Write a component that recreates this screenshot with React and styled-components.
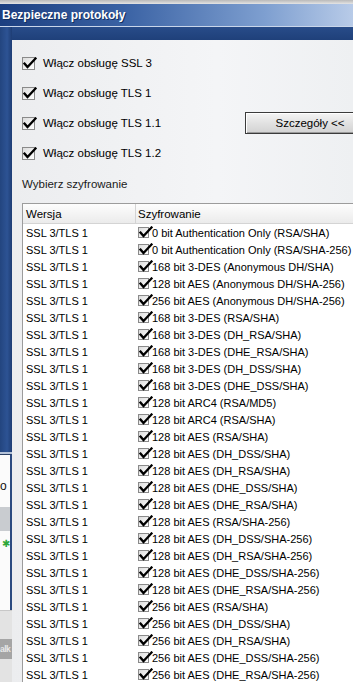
import React from 'react'
import styled, { createGlobalStyle } from 'styled-components'

const GlobalStyle = createGlobalStyle`
  html, body {
    margin: 0;
    padding: 0;
    width: 353px;
    height: 682px;
    overflow: hidden;
    background: #d4d4d4;
  }
  body {
    font-family: 'Liberation Sans', Arial, sans-serif;
    font-size: 11px;
    color: #000;
  }
`

const ciphers = [
  '0 bit Authentication Only (RSA/SHA)',
  '0 bit Authentication Only (RSA/SHA-256)',
  '168 bit 3-DES (Anonymous DH/SHA)',
  '128 bit AES (Anonymous DH/SHA-256)',
  '256 bit AES (Anonymous DH/SHA-256)',
  '168 bit 3-DES (RSA/SHA)',
  '168 bit 3-DES (DH_RSA/SHA)',
  '168 bit 3-DES (DHE_RSA/SHA)',
  '168 bit 3-DES (DH_DSS/SHA)',
  '168 bit 3-DES (DHE_DSS/SHA)',
  '128 bit ARC4 (RSA/MD5)',
  '128 bit ARC4 (RSA/SHA)',
  '128 bit AES (RSA/SHA)',
  '128 bit AES (DH_DSS/SHA)',
  '128 bit AES (DH_RSA/SHA)',
  '128 bit AES (DHE_DSS/SHA)',
  '128 bit AES (DHE_RSA/SHA)',
  '128 bit AES (RSA/SHA-256)',
  '128 bit AES (DH_DSS/SHA-256)',
  '128 bit AES (DH_RSA/SHA-256)',
  '128 bit AES (DHE_DSS/SHA-256)',
  '128 bit AES (DHE_RSA/SHA-256)',
  '256 bit AES (RSA/SHA)',
  '256 bit AES (DH_DSS/SHA)',
  '256 bit AES (DH_RSA/SHA)',
  '256 bit AES (DHE_DSS/SHA-256)',
  '256 bit AES (DHE_RSA/SHA-256)'
]

const protocols = [
  'Włącz obsługę SSL 3',
  'Włącz obsługę TLS 1',
  'Włącz obsługę TLS 1.1',
  'Włącz obsługę TLS 1.2'
]

const Check = ({ small }) => (
  <Box $small={small}>
    <svg width="15" height="13" viewBox="0 0 15 13">
      <path
        d="M2.5 6.5 L5.5 10 L13.5 1.5"
        fill="none"
        stroke="#000"
        strokeWidth="2.3"
        strokeLinecap="square"
      />
    </svg>
  </Box>
)

export default function App() {
  return (
    <Screen>
      <GlobalStyle />
      <TopStripe />
      <TitleBar>Bezpieczne protokoły</TitleBar>
      <Body>
        <LeftStrip>
          <StripBlue />
          <StripWindow>
            <StripLetter>o</StripLetter>
            <StripGrey />
            <StripIcon>✱</StripIcon>
          </StripWindow>
          <StripLower>
            <StripButton>alk</StripButton>
          </StripLower>
        </LeftStrip>
        <Main>
          <Band />
          <Panel>
            <Options>
              {protocols.map((p, i) => (
                <Option key={p} style={{ gridRow: i + 1 }}>
                  <Check />
                  <span>{p}</span>
                </Option>
              ))}
              <DetailsButton>Szczegóły &lt;&lt;</DetailsButton>
            </Options>
            <SectionLabel>Wybierz szyfrowanie</SectionLabel>
            <Table>
              <HeaderRow>
                <HeadCell $first>Wersja</HeadCell>
                <HeadCell>Szyfrowanie</HeadCell>
              </HeaderRow>
              {ciphers.map((c) => (
                <Row key={c}>
                  <Cell $first>SSL 3/TLS 1</Cell>
                  <Cell>
                    <Check small />
                    <span>{c}</span>
                  </Cell>
                </Row>
              ))}
            </Table>
          </Panel>
        </Main>
      </Body>
    </Screen>
  )
}

const Screen = styled.div`
  width: 353px;
  height: 682px;
  display: flex;
  flex-direction: column;
  overflow: hidden;
`

const TopStripe = styled.div`
  height: 4px;
  background: linear-gradient(to bottom, #b9b9b9, #e4e4e4);
  flex-shrink: 0;
`

const TitleBar = styled.div`
  height: 23px;
  flex-shrink: 0;
  box-sizing: border-box;
  padding: 0 0 1px 2px;
  display: flex;
  align-items: center;
  background: linear-gradient(to right, #1c3f80 0%, #3a62a4 35%, #7e9fd0 75%, #b8cbe8 100%);
  border-bottom: 1px solid #c9d6ea;
  color: #fff;
  font-weight: bold;
  font-size: 12px;
  text-shadow: 1px 1px 0 #12305f;
`

const Body = styled.div`
  flex: 1;
  display: flex;
  min-height: 0;
`

const LeftStrip = styled.div`
  width: 12px;
  flex-shrink: 0;
  display: flex;
  flex-direction: column;
`

const StripBlue = styled.div`
  height: 425px;
  background: linear-gradient(to right, #23457f, #2d5394 60%, #1e3d74);
  border-bottom: 2px solid #b4c2d8;
`

const StripWindow = styled.div`
  height: 155px;
  background: #fbfbfb;
  border-top: 1px solid #2a3f63;
  border-right: 2px solid #2b4a80;
  display: flex;
  flex-direction: column;
  overflow: hidden;
`

const StripLetter = styled.div`
  height: 52px;
  padding-top: 24px;
  box-sizing: border-box;
  font-size: 12px;
  color: #111;
`

const StripGrey = styled.div`
  height: 24px;
  background: #c9ccd0;
`

const StripIcon = styled.div`
  margin-top: 8px;
  font-size: 10px;
  color: #2fa83a;
  text-align: right;
  line-height: 1;
`

const StripLower = styled.div`
  flex: 1;
  background: #e3e3e3;
  border-top: 1px solid #c8c8c8;
  padding-top: 28px;
`

const StripButton = styled.div`
  height: 20px;
  background: #a5a5a5;
  color: #e8e8e8;
  font-weight: bold;
  font-size: 8.5px;
  line-height: 20px;
  letter-spacing: -0.6px;
  white-space: nowrap;
`

const Main = styled.div`
  flex: 1;
  display: flex;
  flex-direction: column;
  min-width: 0;
`

const Band = styled.div`
  height: 13px;
  flex-shrink: 0;
  background: linear-gradient(to bottom, #284c89, #1f407a);
`

const Panel = styled.div`
  flex: 1;
  background: linear-gradient(to right, #ecedef, #f4f5f7 60%, #eef0f2);
  padding: 13px 0 0 10px;
  overflow: hidden;
  display: flex;
  flex-direction: column;
`

const Options = styled.div`
  display: grid;
  grid-template-columns: 223px 130px;
  grid-auto-rows: 20px;
  row-gap: 10px;
`

const Option = styled.label`
  grid-column: 1;
  display: flex;
  align-items: center;
  gap: 8px;
  font-size: 11.5px;
`

const Box = styled.span`
  position: relative;
  flex-shrink: 0;
  box-sizing: border-box;
  width: ${(p) => (p.$small ? '11px' : '13px')};
  height: ${(p) => (p.$small ? '11px' : '13px')};
  border: 1px solid #8a8a8a;
  background: linear-gradient(135deg, #dcdcdc, #ffffff);

  svg {
    position: absolute;
    left: -1px;
    top: ${(p) => (p.$small ? '-2px' : '-1px')};
  }
`

const DetailsButton = styled.button`
  grid-column: 2;
  grid-row: 3;
  align-self: center;
  height: 22px;
  width: 130px;
  padding: 0;
  border: 1px solid #3b3b3b;
  box-shadow: inset 1px 1px 0 #fff, inset -1px -1px 0 #9a9a9a;
  background: linear-gradient(to bottom, #f4f4f4, #e2e2e2 50%, #d2d2d2);
  font-family: inherit;
  font-size: 11.5px;
  color: #000;
  text-align: center;
`

const SectionLabel = styled.div`
  margin-top: 14px;
  height: 14px;
  line-height: 14px;
  font-size: 11.5px;
  color: #1a1a1a;
`

const Table = styled.div`
  margin-top: 12px;
  width: 340px;
  flex: 1;
  background: #fff;
  border-top: 1px solid #9c9c9c;
  border-left: 1px solid #9c9c9c;
`

const HeaderRow = styled.div`
  display: grid;
  grid-template-columns: 113px 1fr;
  height: 19px;
  background: linear-gradient(to bottom, #fdfdfd, #ebebeb);
  border-bottom: 1px solid #d4d4d4;
`

const HeadCell = styled.div`
  display: flex;
  align-items: center;
  padding-left: ${(p) => (p.$first ? '3px' : '2px')};
  border-right: ${(p) => (p.$first ? '1px solid #d3d3d3' : 'none')};
  font-size: 11.5px;
`

const Row = styled.div`
  display: grid;
  grid-template-columns: 114px 1fr;
  height: 17px;
`

const Cell = styled.div`
  display: flex;
  align-items: center;
  gap: 3px;
  padding-left: ${(p) => (p.$first ? '3px' : '1px')};
  white-space: nowrap;
  font-size: 11px;
`
